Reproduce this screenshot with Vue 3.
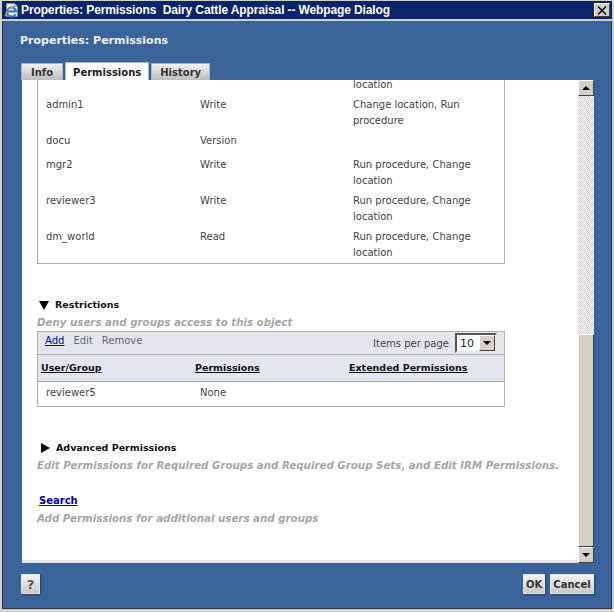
<script setup>
const permissions = [
  { user: "", perm: "", ext: "location", clipped: true },
  { user: "admin1", perm: "Write", ext: "Change location, Run procedure" },
  { user: "docu", perm: "Version", ext: "" },
  { user: "mgr2", perm: "Write", ext: "Run procedure, Change location" },
  { user: "reviewer3", perm: "Write", ext: "Run procedure, Change location" },
  { user: "dm_world", perm: "Read", ext: "Run procedure, Change location" },
];

const tabs = ["Info", "Permissions", "History"];
</script>

<template>
  <div class="window">
    <div class="titlebar">
      <svg class="ie-icon" width="16" height="16" viewBox="0 0 16 16">
        <path d="M2.500 1.500h8l3 3v10h-11z" fill="#f6f6f6" stroke="#8c8c8c" stroke-width="0.800" />
        <path d="M10.500 1.500v3h3" fill="#cfcfcf" stroke="#8c8c8c" stroke-width="0.800" />
        <path d="M11.600 12.200A4.600 4.600 0 1 1 12.100 9.400H4" fill="none" stroke="#2a7ad6" stroke-width="2.200" />
        <path d="M1 14C3 8.500 7 4.500 12.500 3.500" fill="none" stroke="#e8a818" stroke-width="1.100" />
      </svg>
      <span class="title-text">Properties: Permissions&nbsp; Dairy Cattle Appraisal -- Webpage Dialog</span>
      <button class="close-btn" type="button">
        <svg width="10" height="9" viewBox="0 0 10 9">
          <path d="M1 0.500L9 8.500M9 0.500L1 8.500" stroke="#111" stroke-width="1.600" />
        </svg>
      </button>
    </div>

    <div class="dialog">
      <h1 class="dialog-heading">Properties: Permissions</h1>

      <div class="tabs">
        <div v-for="t in tabs" :key="t" class="tab" :class="{ active: t === 'Permissions' }">{{ t }}</div>
      </div>

      <div class="panel">
        <div class="content">
          <div class="perm-table">
            <div v-for="(p, i) in permissions" :key="i" class="perm-row" :class="{ clipped: p.clipped }">
              <div>{{ p.user }}</div>
              <div>{{ p.perm }}</div>
              <div>{{ p.ext }}</div>
            </div>
          </div>

          <div class="section restrictions">
            <div class="section-head"><span class="tri-down"></span>Restrictions</div>
            <div class="hint">Deny users and groups access to this object</div>
          </div>

          <div class="restrict-table">
            <div class="toolbar">
              <div class="actions">
                <a class="add-link">Add</a>
                <span>Edit</span>
                <span>Remove</span>
              </div>
              <div class="pager">
                <span>Items per page</span>
                <div class="select">
                  <span class="select-val">10</span>
                  <span class="select-btn"><span class="arrow-down"></span></span>
                </div>
              </div>
            </div>
            <div class="head-row">
              <span>User/Group</span>
              <span>Permissions</span>
              <span>Extended Permissions</span>
            </div>
            <div class="body-row">
              <div>reviewer5</div>
              <div>None</div>
            </div>
          </div>

          <div class="section advanced">
            <div class="section-head"><span class="tri-right"></span>Advanced Permissions</div>
            <div class="hint">Edit Permissions for Required Groups and Required Group Sets, and Edit IRM Permissions.</div>
          </div>

          <div class="section search">
            <a class="search-link">Search</a>
            <div class="hint">Add Permissions for additional users and groups</div>
          </div>
        </div>

        <div class="scrollbar">
          <div class="sb-btn"><span class="arrow-up"></span></div>
          <div class="sb-track"></div>
          <div class="sb-thumb"></div>
          <div class="sb-btn"><span class="arrow-down"></span></div>
        </div>
      </div>

      <div class="footer">
        <button class="btn help" type="button">?</button>
        <div class="footer-right">
          <button class="btn ok" type="button">OK</button>
          <button class="btn cancel" type="button">Cancel</button>
        </div>
      </div>
    </div>
  </div>
</template>

<style>
html,
body {
  margin: 0;
  background: #d4d0c8;
}
</style>

<style scoped>
.window {
  width: 614px;
  height: 612px;
  box-sizing: border-box;
  padding: 1px 2px 3px 2px;
  background: #d4d0c8;
  display: flex;
  flex-direction: column;
  font-family: "DejaVu Sans", sans-serif;
  overflow: hidden;
}

.titlebar {
  height: 18px;
  background: #0a246a;
  display: flex;
  align-items: center;
  flex-shrink: 0;
  margin-bottom: 2px;
}

.ie-icon {
  flex-shrink: 0;
  margin: 0 1px 0 2px;
}

.title-text {
  flex: 1;
  color: #fff;
  font-family: "Liberation Sans", sans-serif;
  font-weight: 700;
  font-size: 12px;
  white-space: nowrap;
  letter-spacing: -0.12px;
}

.close-btn {
  width: 16px;
  height: 14px;
  padding: 0;
  margin-right: 2px;
  background: #d4d0c8;
  border: 1px solid;
  border-color: #fff #404040 #404040 #fff;
  display: flex;
  align-items: center;
  justify-content: center;
}

.dialog {
  flex: 1;
  background: #3a6499;
  border: 1px solid #27303f;
  border-top: 0;
  padding: 0 17px 0 19px;
  display: flex;
  flex-direction: column;
  min-height: 0;
}

.dialog-heading {
  margin: 12px 0 13px -2px;
  font-size: 11px;
  line-height: 16px;
  font-weight: 700;
  color: #eef1f6;
}

.tabs {
  display: flex;
  align-items: flex-end;
  gap: 2px;
  height: 18px;
  margin-left: -1px;
}

.tab {
  height: 17px;
  box-sizing: border-box;
  padding: 0 8px;
  font-size: 10px;
  font-weight: 700;
  line-height: 17px;
  color: #333;
  background: linear-gradient(#f2f2f2, #bdbdbd);
  border: 1px solid #a8b4c6;
  border-bottom: 0;
}

.tab:first-child {
  padding: 0 9px;
}

.tab.active {
  height: 18px;
  padding: 0 7px;
  line-height: 20px;
  background: #fff;
  color: #222;
}

.panel {
  height: 483px;
  width: 572px;
  background: #fff;
  display: flex;
  box-shadow: inset 0 -3px 0 #e6e6e6;
}

.content {
  flex: 1;
  min-width: 0;
  padding-left: 15px;
  font-size: 10px;
  color: #444;
  overflow: hidden;
}

.perm-table {
  width: 468px;
  height: 184px;
  box-sizing: border-box;
  border: 1px solid #aeaeae;
  border-top: 0;
  overflow: hidden;
}

.perm-row {
  display: grid;
  grid-template-columns: 154px 153px 1fr;
  padding: 4px 30px 0 8px;
  line-height: 16px;
  min-height: 24px;
  box-sizing: border-box;
}

.perm-row.clipped {
  padding-top: 0;
  min-height: 0;
  height: 16px;
  margin-top: -3px;
}

.section-head {
  display: flex;
  align-items: center;
  font-size: 9.5px;
  font-weight: 700;
  color: #111;
  line-height: 14px;
}

.tri-down {
  width: 0;
  height: 0;
  margin: 0 6px 0 2px;
  border-left: 5px solid transparent;
  border-right: 5px solid transparent;
  border-top: 9px solid #000;
}

.tri-right {
  width: 0;
  height: 0;
  margin: 0 6px 0 4px;
  border-top: 5px solid transparent;
  border-bottom: 5px solid transparent;
  border-left: 9px solid #000;
}

.hint {
  font-size: 10.25px;
  font-weight: 700;
  font-style: italic;
  color: #a6a6a6;
  line-height: 14px;
  margin-top: 3px;
  white-space: nowrap;
}

.restrictions {
  margin-top: 34px;
}

.restrict-table {
  width: 468px;
  box-sizing: border-box;
  border: 1px solid #aeaeae;
  margin-top: 2px;
}

.toolbar {
  height: 23px;
  box-sizing: border-box;
  background: #e4e6ee;
  border-bottom: 1px solid #aeaeae;
  display: flex;
  justify-content: space-between;
  align-items: center;
  padding: 0 7px 0 7px;
  color: #666;
}

.actions {
  display: flex;
  gap: 9px;
  margin-top: -5px;
}

.add-link {
  color: #0000aa;
  text-decoration: underline;
}

.pager {
  display: flex;
  align-items: center;
  gap: 6px;
  color: #444;
}

.select {
  width: 42px;
  height: 20px;
  box-sizing: border-box;
  background: #fff;
  border: 2px solid;
  border-color: #555 #e8e8e8 #e8e8e8 #555;
  display: flex;
  justify-content: space-between;
  align-items: center;
  padding-left: 3px;
  font-size: 11px;
  color: #222;
}

.select-btn {
  width: 16px;
  height: 16px;
  background: #d4d0c8;
  border: 1px solid;
  border-color: #fff #404040 #404040 #fff;
  display: flex;
  align-items: center;
  justify-content: center;
  box-sizing: border-box;
}

.arrow-down {
  width: 0;
  height: 0;
  border-left: 4px solid transparent;
  border-right: 4px solid transparent;
  border-top: 4px solid #000;
}

.arrow-up {
  width: 0;
  height: 0;
  border-left: 4px solid transparent;
  border-right: 4px solid transparent;
  border-bottom: 4px solid #000;
}

.head-row {
  height: 27px;
  box-sizing: border-box;
  background: #e4e6ee;
  border-bottom: 1px solid #aeaeae;
  display: grid;
  grid-template-columns: 154px 154px 1fr;
  align-items: center;
  padding: 0 0 2px 3px;
  font-size: 9.5px;
  font-weight: 700;
  color: #111;
  text-decoration: underline;
}

.body-row {
  height: 24px;
  box-sizing: border-box;
  display: grid;
  grid-template-columns: 154px 1fr;
  align-items: center;
  padding: 0 0 3px 8px;
}

.advanced {
  margin-top: 34px;
}

.search {
  margin-top: 22px;
}

.search-link {
  font-size: 10px;
  font-weight: 700;
  color: #0000aa;
  text-decoration: underline;
  line-height: 14px;
  display: block;
  padding-left: 2px;
}

.scrollbar {
  width: 16px;
  flex-shrink: 0;
  display: flex;
  flex-direction: column;
}

.sb-btn {
  height: 16px;
  box-sizing: border-box;
  background: #d4d0c8;
  border: 1px solid;
  border-color: #fff #404040 #404040 #fff;
  display: flex;
  align-items: center;
  justify-content: center;
  flex-shrink: 0;
}

.sb-track {
  height: 238px;
  background: repeating-conic-gradient(#fff 0 25%, #d4d0c8 0 50%) 0 0 / 2px 2px;
}

.sb-thumb {
  flex: 1;
  background: #d4d0c8;
  border: 1px solid;
  border-color: #fff #404040 #404040 #fff;
}

.footer {
  display: flex;
  justify-content: space-between;
  margin-top: 11px;
  margin-left: -1px;
}

.footer-right {
  display: flex;
  gap: 5px;
}

.btn {
  height: 20px;
  padding: 0;
  font-family: "DejaVu Sans", sans-serif;
  font-size: 10px;
  font-weight: 700;
  color: #333;
  background: linear-gradient(#f4f4f4, #c8c8c8);
  border: 1px solid #e8e8e8;
  box-shadow: 1px 1px 2px rgba(0, 0, 0, 0.4);
}

.help {
  width: 19px;
  color: #555;
  font-size: 13px;
}

.ok {
  width: 22px;
}

.cancel {
  width: 44px;
}
</style>
